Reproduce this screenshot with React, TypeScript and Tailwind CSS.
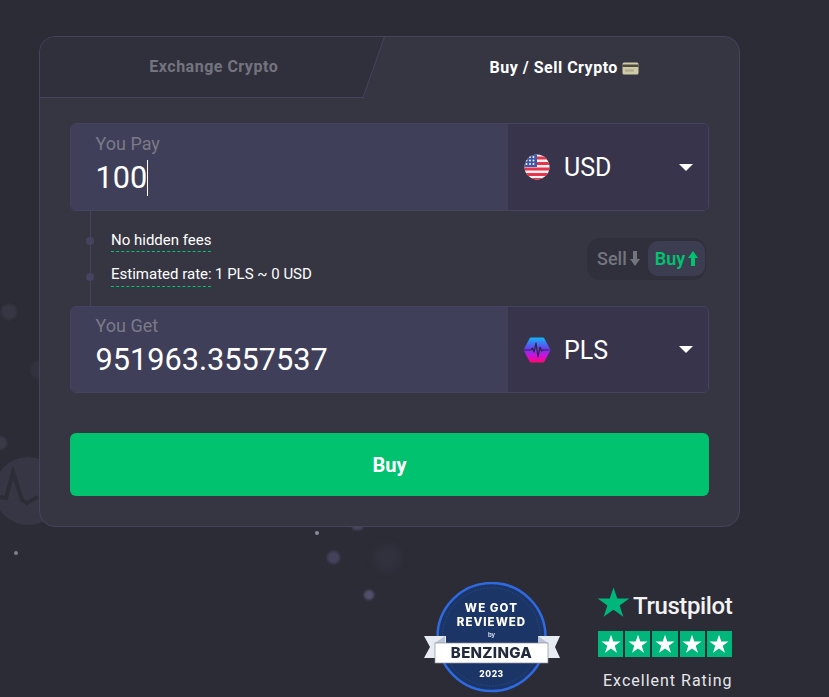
import React from "react";

const Dot = ({ c }: { c: string }) => <div className={c} />;

function UsFlag() {
  return (
    <svg width="26" height="26" viewBox="0 0 26 26" className="shrink-0">
      <defs>
        <clipPath id="fc"><circle cx="13" cy="13" r="12.500" /></clipPath>
      </defs>
      <g clipPath="url(#fc)">
        <rect width="26" height="26" fill="#f4f1f1" />
        <rect y="2.500" width="26" height="3" fill="#e5344c" />
        <rect y="8" width="26" height="3" fill="#e5344c" />
        <rect y="13.500" width="26" height="3" fill="#e5344c" />
        <rect y="19" width="26" height="3" fill="#e5344c" />
        <rect y="24" width="26" height="2" fill="#e5344c" />
        <rect width="13" height="13" fill="#3d5aa8" />
        {[3, 6.500, 10].map((y) =>
          [2.500, 6, 9.500].map((x) => <circle key={`${x}-${y}`} cx={x} cy={y} r="1" fill="#f4f1f1" />)
        )}
      </g>
    </svg>
  );
}

function PlsIcon() {
  return (
    <svg width="28" height="26" viewBox="0 0 28 26" className="shrink-0">
      <defs>
        <linearGradient id="pg" x1="0" y1="0" x2="0" y2="1">
          <stop offset="0" stopColor="#12b5f5" />
          <stop offset="0.450" stopColor="#6a3df0" />
          <stop offset="0.750" stopColor="#d40fd8" />
          <stop offset="1" stopColor="#fb0a6a" />
        </linearGradient>
      </defs>
      <path d="M8 .5h12a1.500 1.500 0 0 1 1.300.8L27 12a2 2 0 0 1 0 2l-5.700 10.700a1.500 1.500 0 0 1-1.300.8H8a1.500 1.500 0 0 1-1.300-.8L1 14a2 2 0 0 1 0-2L6.700 1.300A1.500 1.500 0 0 1 8 .5z" fill="url(#pg)" />
      <path d="M1 13h7l1.500-2 1.500 4 2-9 2 14 2-10 1.500 4 1-1h7" fill="none" stroke="#2b2640" strokeWidth="1.200" strokeLinejoin="round" />
    </svg>
  );
}

function CardEmoji() {
  return (
    <svg width="17" height="13" viewBox="0 0 17 13" className="ml-[4px] mt-[2px]">
      <rect x="0.500" y="0.500" width="16" height="12" rx="1.500" fill="#cfcba6" />
      <rect x="0.500" y="2.500" width="16" height="2.500" fill="#4e4b3c" />
      <rect x="3" y="7.500" width="9" height="2" fill="#aeaa8c" />
    </svg>
  );
}

function Caret() {
  return <div className="w-0 h-0 border-l-[7px] border-r-[7px] border-t-[7px] border-l-transparent border-r-transparent border-t-white" />;
}

function Field({ label, value, code, icon, cursor, tall }: { label: string; value: string; code: string; icon: React.ReactNode; cursor?: boolean; tall?: boolean }) {
  return (
    <div className={`flex rounded-[6px] border border-[#45435e] overflow-hidden ${tall ? "h-[88px]" : "h-[87px]"}`}>
      <div className={`flex-1 bg-[#3f3f5a] pl-[24.500px] ${tall ? "pt-[9px]" : "pt-[8px]"}`}>
        <div className="text-[18px] leading-[22px] text-[#7b7a88]">{label}</div>
        <div className="flex items-center h-[38px] mt-[4px] text-[30.700px] leading-[38px] text-white">
          {value}
          {cursor && <span className="inline-block w-px h-[36px] bg-white" />}
        </div>
      </div>
      <div className="w-[200px] bg-[#38344c] flex items-center pl-[15px] pr-[15px]">
        <div className="w-[28px] flex justify-center">{icon}</div>
        <span className={`ml-[13px] text-[25px] text-white flex-1 ${tall ? "mt-[1px]" : "mt-[3px]"}`}>{code}</span>
        <Caret />
      </div>
    </div>
  );
}

function Star({ size, className }: { size: number; className?: string }) {
  return (
    <svg width={size} height={size} viewBox="0 0 24 24" className={className}>
      <path d="M12 1l2.750 8.100h8.750l-7.050 5.050 2.700 8.200L12 17.300l-7.150 5.050 2.700-8.200L.5 9.100h8.750z" fill="currentColor" />
    </svg>
  );
}

function Benzinga() {
  return (
    <svg width="142" height="112" viewBox="0 0 142 112" className="blur-[0.3px]">
      <circle cx="71.500" cy="55" r="54" fill="#1b3567" stroke="#2f6ae0" strokeWidth="2.500" />
      <circle cx="71.500" cy="55" r="49" fill="none" stroke="#2c4a82" strokeWidth="1" strokeDasharray="1.500 1.500" />
      <path d="M4 54h22v22H4l6-11z" fill="#e6ebf4" />
      <path d="M140 54h-22v22h22l-5-11z" fill="#e6ebf4" />
      <path d="M15 61l10-7v7z" fill="#b9c4d6" />
      <path d="M128 61l-10-7v7z" fill="#b9c4d6" />
      <rect x="15" y="61" width="113" height="20" fill="#ffffff" stroke="#8a8f99" strokeWidth="0.700" />
      <text x="71.500" y="30" textAnchor="middle" fontFamily="Inter, sans-serif" fontWeight="800" fontSize="11.500" letterSpacing="1.100" fill="#fff">WE GOT</text>
      <text x="71.500" y="44" textAnchor="middle" fontFamily="Inter, sans-serif" fontWeight="800" fontSize="11.500" letterSpacing="1" fill="#fff">REVIEWED</text>
      <text x="71.500" y="55" textAnchor="middle" fontFamily="Inter, sans-serif" fontWeight="600" fontSize="6" fill="#dfe5f0">by</text>
      <text x="71.500" y="76" textAnchor="middle" fontFamily="Inter, sans-serif" fontWeight="800" fontSize="15" letterSpacing="0.300" fill="#222b3d">BENZINGA</text>
      <text x="71.500" y="95" textAnchor="middle" fontFamily="Inter, sans-serif" fontWeight="800" fontSize="8.500" letterSpacing="0.500" fill="#fff">2023</text>
    </svg>
  );
}

export default function App() {
  return (
    <div className="relative w-[829px] h-[697px] overflow-hidden bg-[#2c2c37] font-['Roboto',sans-serif]">
      {/* particles */}
      <Dot c="absolute left-[1px] top-[304px] w-4 h-4 rounded-full bg-[#363644] blur-[1px]" />
      <Dot c="absolute left-[30px] top-[360px] w-5 h-5 rounded-full bg-[#32323f] blur-[1px]" />
      <Dot c="absolute left-[-7px] top-[436px] w-[14px] h-[14px] rounded-full bg-[#3a3a49] blur-[1px]" />
      <Dot c="absolute left-[14px] top-[551px] w-[4px] h-[4px] rounded-full bg-[#7f7f92] blur-[0.5px]" />
      <Dot c="absolute left-[315px] top-[531px] w-[4px] h-[4px] rounded-full bg-[#8a8a9c] blur-[0.5px]" />
      <Dot c="absolute left-[327px] top-[551px] w-[13px] h-[13px] rounded-full bg-[#42425a] blur-[1px]" />
      <Dot c="absolute left-[373px] top-[544px] w-[28px] h-[28px] rounded-full bg-[#31313d] blur-[3px]" />
      <Dot c="absolute left-[364px] top-[590px] w-[10px] h-[10px] rounded-full bg-[#50506a] blur-[1px]" />
      <Dot c="absolute left-[352px] top-[522px] w-[11px] h-[8px] rounded-full bg-[#47475f] blur-[1px]" />
      <svg width="70" height="70" viewBox="0 0 70 70" className="absolute left-[-6px] top-[457px] blur-[0.5px]">
        <circle cx="34" cy="34" r="34" fill="#363644" />
        <path d="M4 40l8 1 7-26 9 28 5 3 11-6" fill="none" stroke="#2d2d38" strokeWidth="4" />
      </svg>

      <div className="relative pt-[36px] pl-[39px]">
        <div className="w-[701px] h-[491px] rounded-[16px] border border-[#45435e] bg-[#363643] overflow-hidden">
          <div className="flex h-[61px]">
            <div className="relative w-1/2 flex items-center justify-center border-b border-[#45435e] bg-[#30303c] mr-[-26px] pr-[2px] z-0">
              <span className="text-[16px] font-bold tracking-[0.500px] text-[#74747f]">Exchange Crypto</span>
            </div>
            <div className="relative w-1/2 ml-[26px] flex items-center justify-center">
              <div className="absolute left-[-28px] top-[0px] bottom-[-1px] w-[28px] bg-[#363643] border-l border-[#45435e] origin-bottom-left -skew-x-[19.5deg]" />
              <span className="relative text-[16px] font-bold tracking-[0.500px] text-white">Buy / Sell Crypto</span>
              <CardEmoji />
            </div>
          </div>
          <div className="px-[30px] pt-[25px]">
            <Field label="You Pay" value="100" code="USD" icon={<UsFlag />} cursor tall />
            <div className="relative flex justify-between items-start h-[95px] pl-[41px] pr-[3px]">
              <div className="absolute left-[20px] top-0 bottom-0 w-px bg-[#45435e]" />
              <div className="absolute left-[16px] top-[26px] w-[8px] h-[8px] rounded-full bg-[#45435e]" />
              <div className="absolute left-[16px] top-[62px] w-[8px] h-[8px] rounded-full bg-[#45435e]" />
              <div className="flex flex-col gap-[12px] pt-[19px] text-[15px] text-white leading-[20px]">
                <div className="h-[22px]"><span className="block w-[100px] whitespace-nowrap border-b border-dashed border-[#00c26f] h-[22px]">No hidden fees</span></div>
                <div className="flex whitespace-nowrap">
                  <span className="block w-[100px] border-b border-dashed border-[#00c26f] h-[23px]">Estimated rate:</span>
                  <span className="ml-[4px]">1 PLS ~ 0 USD</span>
                </div>
              </div>
              <div className="self-center flex items-center h-[42px] rounded-[13px] bg-[#30303c] pl-[10px] pr-[1px] text-[18px] font-medium">
                <span className="flex items-center w-[51px] text-[#74747f]">Sell<span className="ml-[3px] text-[#74747f]">
                  <svg width="10" height="15" viewBox="0 0 10 15"><path d="M3 0h4v8h3l-5 7-5-7h3z" fill="currentColor" /></svg>
                </span></span>
                <span className="flex items-center h-[35px] w-[57px] justify-center rounded-[10px] bg-[#3d3d52] text-[#00c26f] font-semibold">Buy<span className="ml-[3px]">
                  <svg width="10" height="15" viewBox="0 0 10 15"><path d="M3 15h4V7h3L5 0 0 7h3z" fill="currentColor" /></svg>
                </span></span>
              </div>
            </div>
            <Field label="You Get" value="951963.3557537" code="PLS" icon={<PlsIcon />} />
            <button className="block w-full h-[63px] mt-[40px] rounded-[6px] bg-[#00c26f] text-white text-[20px] font-bold">Buy</button>
          </div>
        </div>
      </div>

      <div className="absolute left-[420px] top-[582px]"><Benzinga /></div>

      <div className="absolute left-[598px] top-[586px] w-[134px]">
        <div className="flex items-center h-[33px]">
          <Star size={33} className="text-[#00b67a] shrink-0 -ml-[1px]" />
          <span className="ml-[3px] mt-[7px] text-[24px] font-medium tracking-[-0.400px] text-[#f2f2f2]">Trustpilot</span>
        </div>
        <div className="flex gap-[2px] mt-[12px]">
          {[0, 1, 2, 3, 4].map((i) => (
            <div key={i} className="w-[25.200px] h-[26px] bg-[#00b67a] flex items-center justify-center">
              <Star size={20} className="text-white" />
            </div>
          ))}
        </div>
        <div className="mt-[13px] ml-[5px] text-[16px] tracking-[1px] text-[#e6e6ea] whitespace-nowrap leading-[22px]">Excellent Rating</div>
      </div>
    </div>
  );
}
